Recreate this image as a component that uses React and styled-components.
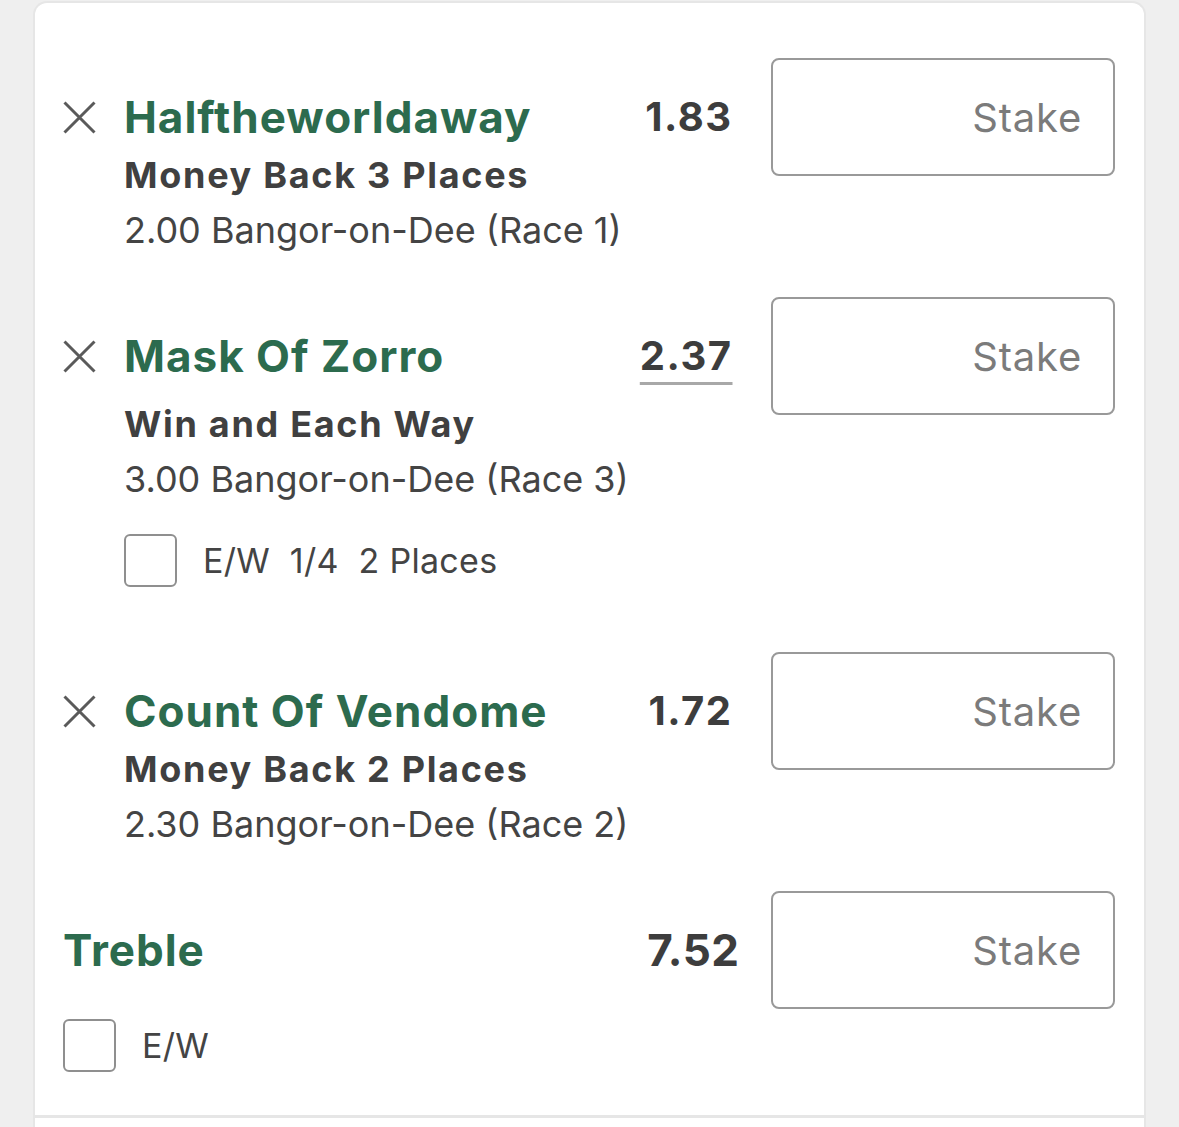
import styled, { createGlobalStyle } from "styled-components";

const bets = [
  {
    name: "Halftheworldaway",
    market: "Money Back 3 Places",
    venue: "2.00 Bangor-on-Dee (Race 1)",
    odds: "1.83",
  },
  {
    name: "Mask Of Zorro",
    market: "Win and Each Way",
    venue: "3.00 Bangor-on-Dee (Race 3)",
    odds: "2.37",
    linked: true,
    eachWay: "E/W  1/4  2 Places",
  },
  {
    name: "Count Of Vendome",
    market: "Money Back 2 Places",
    venue: "2.30 Bangor-on-Dee (Race 2)",
    odds: "1.72",
  },
];

const CloseIcon = () => (
  <svg width="33" height="33" viewBox="0 0 33 33">
    <path d="M1.5 1.5 L31.5 31.5 M31.5 1.5 L1.5 31.5" stroke="#5a5a5a" strokeWidth="3" fill="none" />
  </svg>
);

const App = () => {
  return (
    <>
      <GlobalStyle />
      <Card>
        <Slip>
          {bets.map((bet) => (
            <BetRow key={bet.name} $extraBottom={bet.eachWay ? 25 : 0}>
              <Info>
                <NameLine>
                  <CloseButton aria-label="Remove">
                    <CloseIcon />
                  </CloseButton>
                  <Name>{bet.name}</Name>
                </NameLine>
                <Details>
                  <Market $shift={bet.linked ? 10 : 0}>{bet.market}</Market>
                  <Venue>{bet.venue}</Venue>
                  {bet.eachWay && (
                    <CheckRow>
                      <CheckBox />
                      <CheckLabel>{bet.eachWay}</CheckLabel>
                    </CheckRow>
                  )}
                </Details>
              </Info>
              <Odds $size={40} $gap={40} $track={1.5}>
                {bet.linked ? <OddsLink>{bet.odds}</OddsLink> : bet.odds}
              </Odds>
              <StakeInput placeholder="Stake" />
            </BetRow>
          ))}

          <BetRow>
            <Info>
              <NameLine>
                <Name>Treble</Name>
              </NameLine>
              <CheckRow $top={39}>
                <CheckBox />
                <CheckLabel>E/W</CheckLabel>
              </CheckRow>
            </Info>
            <Odds $size={44} $gap={32} $track={0.5}>
              7.52
            </Odds>
            <StakeInput placeholder="Stake" />
          </BetRow>
        </Slip>
        <Footer />
      </Card>
    </>
  );
};

const GlobalStyle = createGlobalStyle`
  body {
    margin: 0;
    background: #efefef;
    font-family: Inter, "Noto Sans", sans-serif;
    color: #3f3f3f;
  }
`;

const Card = styled.div`
  margin: 1px 33px 0 33px;
  background: #fff;
  border: 2px solid #e6e6e6;
  border-bottom: 0;
  border-radius: 14px 14px 0 0;
  min-height: 1126px;
  box-sizing: border-box;
`;

const Slip = styled.div`
  padding: 55px 29px 43px 28px;
`;

const BetRow = styled.div`
  display: flex;
  align-items: flex-start;
  margin-bottom: ${(props) => 40 + (props.$extraBottom || 0)}px;
  &:last-child {
    margin-bottom: 0;
  }
`;

const Info = styled.div`
  flex: 1;
  padding-top: 29px;
  min-width: 0;
`;

const NameLine = styled.div`
  display: flex;
  align-items: center;
  height: 60px;
`;

const CloseButton = styled.button`
  width: 33px;
  height: 33px;
  padding: 0;
  margin-right: 28px;
  border: 0;
  background: none;
  display: flex;
  cursor: pointer;
`;

const Name = styled.div`
  font-size: 44px;
  font-weight: 700;
  letter-spacing: 1px;
  color: #2c6b4e;
  line-height: 60px;
  white-space: nowrap;
`;

const Details = styled.div`
  padding-left: 61px;
`;

const Market = styled.div`
  margin-top: ${(props) => props.$shift}px;
  font-size: 36px;
  font-weight: 700;
  letter-spacing: 1.7px;
  line-height: 56px;
  color: #404040;
  white-space: nowrap;
`;

const Venue = styled.div`
  font-size: 36px;
  font-weight: 400;
  line-height: 54px;
  color: #444;
  white-space: nowrap;
`;

const CheckRow = styled.label`
  display: flex;
  align-items: center;
  gap: 26px;
  margin-top: ${(props) => props.$top || 28}px;
`;

const CheckBox = styled.span`
  width: 53px;
  height: 53px;
  box-sizing: border-box;
  border: 2.5px solid #8f8f8f;
  border-radius: 6px;
  flex-shrink: 0;
`;

const CheckLabel = styled.span`
  font-size: 34px;
  letter-spacing: 0.3px;
  color: #444;
  white-space: pre;
`;

const Odds = styled.div`
  padding-top: 29px;
  line-height: 60px;
  font-size: ${(props) => props.$size}px;
  font-weight: 700;
  letter-spacing: ${(props) => props.$track}px;
  color: #3d3d3d;
  margin-right: ${(props) => props.$gap - props.$track}px;
`;

const OddsLink = styled.span`
  text-decoration: underline;
  text-decoration-color: #a8a8a8;
  text-decoration-thickness: 3px;
  text-underline-offset: 12px;
`;

const StakeInput = styled.input`
  width: 344px;
  height: 118px;
  box-sizing: border-box;
  border: 2px solid #999;
  border-radius: 8px;
  padding: 0 31px 0 16px;
  text-align: right;
  font-family: Inter, "Noto Sans", sans-serif;
  font-size: 40px;
  letter-spacing: 0.8px;
  color: #333;
  background: #fff;
  outline: none;
  flex-shrink: 0;
  &::placeholder {
    color: #7b7b7b;
  }
`;

const Footer = styled.div`
  border-top: 3px solid #e6e6e6;
  height: 40px;
`;

export default App;
